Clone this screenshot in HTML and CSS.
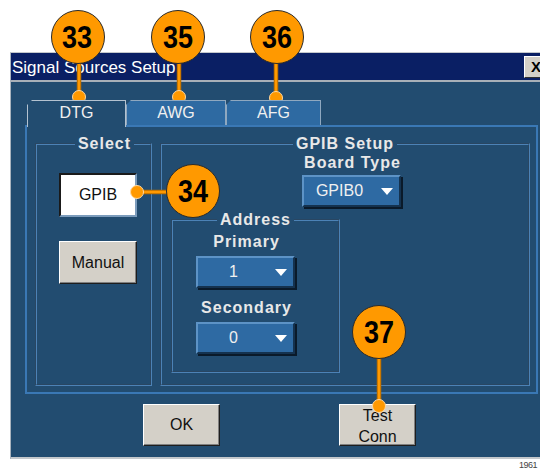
FILE: index.html
```html
<!DOCTYPE html>
<html lang="en">
	<head>
		<meta charset="utf-8">
		<title>Signal Sources Setup</title>
		<link rel="stylesheet" href="styles.css">
	</head>
	<body>

		<!--
			Dialog window with title bar
		-->

		<main class="page">

			<div class="dialog">

				<div class="titlebar">
					<span class="title">Signal Sources Setup</span>
					<span class="close">X</span>
				</div>

				<div class="client">

					<!--
						Tab strip
					-->

					<div class="tabs">
						<div class="tab tab-on">DTG</div>
						<div class="tab">AWG</div>
						<div class="tab">AFG</div>
					</div>

					<!--
						Tab page: select and GPIB setup groups
					-->

					<div class="panel">

						<fieldset class="group select-group">
							<legend>Select</legend>
							<button class="btn btn-on">GPIB</button>
							<button class="btn btn-manual">Manual</button>
						</fieldset>

						<fieldset class="group gpib-group">
							<legend>GPIB Setup</legend>

							<div class="board">
								<div class="label">Board Type</div>
								<div class="dropdown"><span class="value">GPIB0</span><span class="arrow"></span></div>
							</div>

							<fieldset class="group address-group">
								<legend>Address</legend>
								<div class="address-col">
									<div class="label">Primary</div>
									<div class="dropdown"><span class="value">1</span><span class="arrow"></span></div>
									<div class="label label-second">Secondary</div>
									<div class="dropdown"><span class="value">0</span><span class="arrow"></span></div>
								</div>
							</fieldset>

						</fieldset>

					</div>

					<!--
						Dialog buttons
					-->

					<div class="actions">
						<button class="btn btn-ok">OK</button>
						<button class="btn btn-test">Test<br>Conn</button>
					</div>

				</div>
			</div>

			<div class="figno">1961</div>

			<!--
				Numbered callouts drawn over the dialog
			-->

			<svg class="callouts" width="540" height="471" viewBox="0 0 540 471">
				<g class="stem">
					<line x1="79" y1="62" x2="79" y2="97"/>
					<line x1="179" y1="62" x2="179" y2="97"/>
					<line x1="276" y1="62" x2="276" y2="98"/>
					<line x1="137" y1="192" x2="167" y2="192"/>
					<line x1="379" y1="358" x2="379" y2="406"/>
				</g>
				<g class="stem-core">
					<line x1="79" y1="62" x2="79" y2="97"/>
					<line x1="179" y1="62" x2="179" y2="97"/>
					<line x1="276" y1="62" x2="276" y2="98"/>
					<line x1="137" y1="192" x2="167" y2="192"/>
					<line x1="379" y1="358" x2="379" y2="406"/>
				</g>
				<g class="dot">
					<circle cx="79" cy="97" r="6.5"/>
					<circle cx="179" cy="97" r="6.5"/>
					<circle cx="276" cy="98" r="6.5"/>
					<circle cx="137" cy="192" r="6.5"/>
					<circle cx="379" cy="406" r="6.5"/>
				</g>
				<g class="bubble">
					<circle cx="78" cy="37" r="26.5"/>
					<circle cx="178" cy="37" r="26.5"/>
					<circle cx="277" cy="37" r="26.5"/>
					<circle cx="193" cy="191" r="26.5"/>
					<circle cx="379" cy="332" r="26.5"/>
				</g>
				<g class="num">
					<text x="77" y="48" textLength="30" lengthAdjust="spacingAndGlyphs">33</text>
					<text x="178" y="48" textLength="30" lengthAdjust="spacingAndGlyphs">35</text>
					<text x="277" y="48" textLength="30" lengthAdjust="spacingAndGlyphs">36</text>
					<text x="193" y="202" textLength="30" lengthAdjust="spacingAndGlyphs">34</text>
					<text x="379" y="343" textLength="30" lengthAdjust="spacingAndGlyphs">37</text>
				</g>
			</svg>

		</main>

	</body>
</html>
```

FILE: styles.css
```css
/*
	white page, clip the dialog at the window edge
*/

body {
	margin: 0;
	background-color: #ffffff;
	overflow: hidden;
	font-family: "Liberation Sans", Arial, sans-serif;
}

.page {
	position: relative;
	width: 540px;
	height: 471px;
	overflow: hidden;
}

/*
	the dialog window
*/

.dialog {
	margin: 52px 0 0 10px;
	width: 538px;
	border-top: 1px solid #c4c8cc;
	border-left: 1px solid #aab4be;
}

.titlebar {
	display: flex;
	align-items: center;
	height: 27px;
	background-color: #0a1f64;
	border-bottom: 2px solid #a8b0b8;
}

.title {
	padding: 2px 0 0 1px;
	color: #ffffff;
	font-size: 17px;
	white-space: nowrap;
}

.close {
	margin-left: auto;
	margin-right: 3px;
	width: 22px;
	height: 22px;
	box-sizing: border-box;
	padding-left: 6px;
	background-color: #d4d0c8;
	border: 1px solid;
	border-color: #ffffff #303030 #303030 #ffffff;
	font-weight: bold;
	font-size: 15px;
	line-height: 20px;
}

.client {
	box-sizing: border-box;
	height: 377px;
	padding-top: 18px;
	background-color: #224c70;
	border-bottom: 2px solid #c4c8cc;
}

/*
	tab strip
*/

.tabs {
	position: relative;
	z-index: 1;
	display: flex;
	align-items: flex-start;
	margin: 0 0 -2px 16px;
}

.tab {
	box-sizing: border-box;
	height: 25px;
	border: 1px solid #8fa8c0;
	border-bottom: none;
	background-color: #2e6aa2;
	color: #f0f0f0;
	font-size: 16px;
	line-height: 24px;
	text-align: center;
	clip-path: polygon(5px 0, 100% 0, 100% 100%, 0 100%, 0 5px);
}

.tab:nth-child(1) { width: 99px; }
.tab:nth-child(2) { width: 100px; }
.tab:nth-child(3) { width: 95px; }

.tab-on {
	height: 27px;
	background-color: #224c70;
	border-color: #b4c2d0;
}

/*
	tab page
*/

.panel {
	display: flex;
	gap: 8px;
	box-sizing: border-box;
	margin-left: 14px;
	width: 513px;
	height: 269px;
	padding: 8px 6px 6px 8px;
	border: 2px solid #3a78b5;
}

/*
	etched group boxes
*/

.group {
	margin: 0;
	padding: 0;
	min-inline-size: 0;
	border: 2px groove #4c82b6;
}

.group legend {
	margin: 0 auto;
	padding: 0 3px;
	color: #e8e8e8;
	font-weight: bold;
	font-size: 16px;
	letter-spacing: 1px;
	line-height: 18px;
}

.select-group {
	width: 117px;
	box-sizing: border-box;
	padding: 20px 0 0 22px;
}

.gpib-group {
	width: 370px;
	box-sizing: border-box;
}

.label {
	color: #e8e8e8;
	font-weight: bold;
	font-size: 16px;
	letter-spacing: 1px;
	line-height: 18px;
	text-align: center;
	white-space: nowrap;
}

.board {
	display: flex;
	flex-direction: column;
	align-items: center;
	width: 101px;
	margin: 1px 0 0 140px;
}

.board .dropdown {
	margin-top: 3px;
}

.address-group {
	box-sizing: border-box;
	width: 169px;
	height: 162px;
	margin: 4px 0 0 9px;
}

.address-col {
	display: flex;
	flex-direction: column;
	align-items: center;
	width: 101px;
	margin: 4px 0 0 23px;
}

.address-col .dropdown {
	margin-top: 5px;
}

.label-second {
	margin-top: 11px;
}

/*
	drop-down selectors
*/

.dropdown {
	display: flex;
	align-items: center;
	box-sizing: border-box;
	width: 99px;
	height: 32px;
	margin-right: 2px;
	background-color: #2e6aa3;
	border: 2px solid;
	border-color: #5d93c6 #14324f #14324f #5d93c6;
	box-shadow: 2px 2px 0 #0a1a2a;
}

.value {
	flex: 1;
	color: #f0f0f0;
	font-size: 16px;
	text-align: center;
}

.arrow {
	margin: 0 6px 0 6px;
	border-left: 6.5px solid transparent;
	border-right: 6.5px solid transparent;
	border-top: 7px solid #ffffff;
}

/*
	grey push buttons
*/

.btn {
	display: block;
	box-sizing: border-box;
	width: 78px;
	height: 43px;
	padding: 0;
	background-color: #d4d0c8;
	border: 1px solid;
	border-color: #ffffff #1e1e1e #1e1e1e #ffffff;
	box-shadow: inset -1px -1px 0 #808080;
	color: #111111;
	font-family: "Liberation Sans", Arial, sans-serif;
	font-size: 16px;
}

.btn-on {
	height: 44px;
	background-color: #ffffff;
	border: 2px solid;
	border-color: #1a1a1a #7c9cbc #7c9cbc #1a1a1a;
	box-shadow: none;
}

.btn-manual {
	margin-top: 24px;
}

.actions {
	display: flex;
	gap: 119px;
	margin-top: 10px;
	padding-left: 132px;
}

.actions .btn {
	width: 77px;
	height: 42px;
}

.btn-test {
	line-height: 21px;
}

/*
	figure number under the window
*/

.figno {
	padding-left: 519px;
	color: #444444;
	font-size: 9px;
	letter-spacing: -0.5px;
	line-height: 12px;
	white-space: nowrap;
}

/*
	orange callouts
*/

.callouts {
	position: absolute;
	top: 0;
	left: 0;
}

.stem line {
	stroke: #b86c00;
	stroke-width: 4.5;
}

.stem-core line {
	stroke: #ff9900;
	stroke-width: 2.5;
}

.dot circle {
	fill: #ff9900;
	stroke: #ffd8a0;
	stroke-width: 1;
}

.bubble circle {
	fill: #ff9900;
	stroke: #2a2a2a;
	stroke-width: 1;
}

.num text {
	fill: #000000;
	font-family: "Liberation Sans", Arial, sans-serif;
	font-weight: bold;
	font-size: 32px;
	text-anchor: middle;
}
```
